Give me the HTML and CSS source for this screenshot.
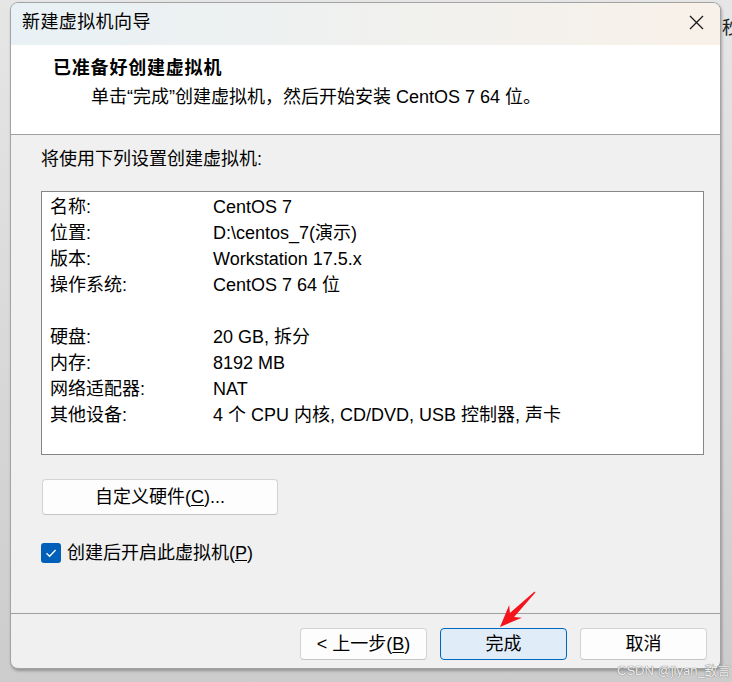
FILE: index.html
```html
<!DOCTYPE html>
<html lang="zh-CN">
<head>
<meta charset="utf-8">
<title>新建虚拟机向导</title>
<link rel="stylesheet" href="styles.css">
</head>
<body>
<span class="behind">秒</span>
<div class="desktop">
  <div class="window">
    <div class="titlebar">
      <span class="title">新建虚拟机向导</span>
      <span class="close" aria-label="关闭">
        <svg width="15" height="15" viewBox="0 0 15 15"><path d="M1 1 L14 14 M14 1 L1 14" stroke="#1b1b1b" stroke-width="1.3" fill="none"/></svg>
      </span>
    </div>
    <div class="header">
      <div class="h-title">已准备好创建虚拟机</div>
      <div class="h-sub">单击“完成”创建虚拟机，然后开始安装 CentOS 7 64 位。</div>
    </div>
    <div class="body">
      <p class="intro">将使用下列设置创建虚拟机:</p>
      <div class="summary">
        <div class="row"><span>名称:</span><span>CentOS 7</span></div>
        <div class="row"><span>位置:</span><span>D:\centos_7(演示)</span></div>
        <div class="row"><span>版本:</span><span>Workstation 17.5.x</span></div>
        <div class="row"><span>操作系统:</span><span>CentOS 7 64 位</span></div>
        <div class="row"></div>
        <div class="row"><span>硬盘:</span><span>20 GB, 拆分</span></div>
        <div class="row"><span>内存:</span><span>8192 MB</span></div>
        <div class="row"><span>网络适配器:</span><span>NAT</span></div>
        <div class="row"><span>其他设备:</span><span>4 个 CPU 内核, CD/DVD, USB 控制器, 声卡</span></div>
      </div>
      <button class="btn custom">自定义硬件(<u>C</u>)...</button>
      <label class="check">
        <span class="box"><svg width="20" height="20" viewBox="0 0 20 20"><path d="M5.5 10.3 L8.6 13.3 L14.6 7" stroke="#fff" stroke-width="1.3" fill="none"/></svg></span>
        <span>创建后开启此虚拟机(<u>P</u>)</span>
      </label>
    </div>
    <div class="footer">
      <button class="btn">&lt; 上一步(<u>B</u>)</button>
      <button class="btn primary">完成</button>
      <button class="btn">取消</button>
    </div>
  </div>
</div>
<svg class="arrow" width="45" height="45" viewBox="0 0 45 45">
  <polygon points="5,39 26.9,29.7 19.1,29.1 40.4,4.4 39.6,3.6 14.9,24.9 14.2,17" fill="#f5141b"/>
</svg>
<span class="watermark">CSDN @jiyan_敌言</span>
</body>
</html>
```
FILE: styles.css
```css
* { box-sizing: border-box; }
html, body { margin: 0; padding: 0; }
body {
  width: 732px;
  height: 682px;
  overflow: hidden;
  position: relative;
  background: linear-gradient(#e6e6e6, #cccccc);
  font-family: "Liberation Sans", "Noto Sans CJK SC", sans-serif;
  font-size: 18px;
  color: #000;
}
.behind {
  position: absolute;
  left: 722px;
  top: 13px;
  font-size: 18px;
  color: #222;
  z-index: 0;
}
.desktop { padding: 2px 0 0 10px; }
.window {
  position: relative;
  z-index: 1;
  width: 711px;
  height: 667px;
  border: 1px solid #a3a3a3;
  border-radius: 8px;
  background: #f0f0f0;
  display: flex;
  flex-direction: column;
  overflow: hidden;
  box-shadow: 1px 2px 3px rgba(0, 0, 0, 0.28);
}
.titlebar {
  flex: none;
  height: 42px;
  display: flex;
  align-items: center;
  justify-content: space-between;
  padding: 0 16px 4px 11px;
  background: linear-gradient(to right, #e8f1f5, #f8f1e9);
}
.title { line-height: 24px; letter-spacing: 0.4px; }
.close { display: flex; }
.header {
  flex: none;
  height: 90px;
  background: #fff;
  border-bottom: 1px solid #a0a0a0;
  padding: 11px 0 0 42px;
}
.h-title { font-weight: bold; line-height: 24px; letter-spacing: 0.8px; }
.h-sub { margin: 5px 0 0 38px; line-height: 24px; }
.body {
  flex: 1;
  padding: 12px 16px 0 30px;
}
.intro { margin: 0; line-height: 24px; }
.summary {
  margin-top: 20px;
  width: 663px;
  height: 264px;
  border: 1px solid #868686;
  background: #fff;
  padding: 2px 0 0 8px;
}
.row {
  display: grid;
  grid-template-columns: 163px 1fr;
  height: 26px;
  line-height: 26px;
  white-space: nowrap;
}
.btn {
  font-family: inherit;
  font-size: 18px;
  color: #000;
  background: #fdfdfd;
  border: 1px solid #d3d3d3;
  border-bottom-color: #c4c4c4;
  border-radius: 4px;
  padding: 0;
  width: 127px;
  height: 32px;
  line-height: 28px;
}
.btn u { text-decoration-thickness: 1px; text-underline-offset: 2px; }
.custom {
  display: block;
  margin: 24px 0 0 1px;
  width: 236px;
  height: 36px;
  line-height: 32px;
}
.check {
  display: flex;
  align-items: center;
  gap: 6px;
  margin-top: 28px;
  height: 20px;
  line-height: 24px;
}
.box {
  width: 20px;
  height: 20px;
  border-radius: 3px;
  background: #005fb8;
  display: flex;
}
.footer {
  flex: none;
  height: 55px;
  border-top: 1px solid #a0a0a0;
  display: flex;
  justify-content: flex-end;
  gap: 13px;
  padding: 14px 13px 0 0;
}
.primary {
  background: #e0ecf8;
  border: 1px solid #0067c0;
}
.arrow {
  position: absolute;
  left: 495px;
  top: 588px;
  z-index: 2;
}
.watermark {
  position: absolute;
  left: 617px;
  top: 660px;
  z-index: 2;
  font-size: 13px;
  color: rgba(255, 255, 255, 0.9);
  text-shadow: 0 0 1px #6f6f6f, 0 0 1px #8a8a8a;
  white-space: nowrap;
}
```
